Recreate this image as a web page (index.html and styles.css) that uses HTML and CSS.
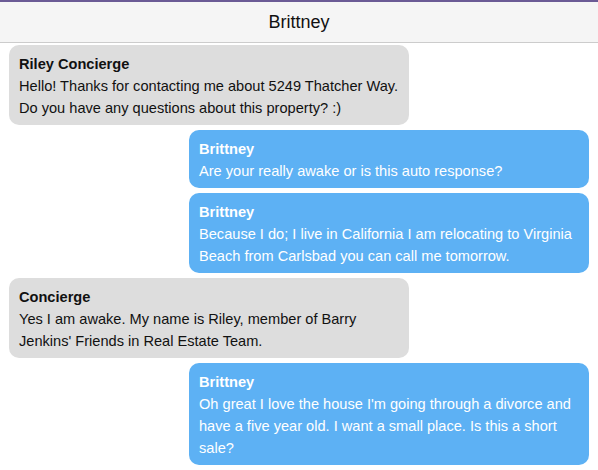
FILE: index.html
```html
<!DOCTYPE html>
<html>
<head>
<meta charset="utf-8">
<link rel="stylesheet" href="styles.css">
</head>
<body>
<div class="app">
  <header class="header">Brittney</header>
  <main class="messages">
    <div class="bubble them">
      <div class="name">Riley Concierge</div>
      <div class="text">Hello! Thanks for contacting me about 5249 Thatcher Way. Do you have any questions about this property? :)</div>
    </div>
    <div class="bubble me">
      <div class="name">Brittney</div>
      <div class="text">Are your really awake or is this auto response?</div>
    </div>
    <div class="bubble me">
      <div class="name">Brittney</div>
      <div class="text">Because I do; I live in California I am relocating to Virginia Beach from Carlsbad you can call me tomorrow.</div>
    </div>
    <div class="bubble them">
      <div class="name">Concierge</div>
      <div class="text">Yes I am awake. My name is Riley, member of Barry Jenkins' Friends in Real Estate Team.</div>
    </div>
    <div class="bubble me">
      <div class="name">Brittney</div>
      <div class="text">Oh great I love the house I'm going through a divorce and have a five year old. I want a small place. Is this a short sale?</div>
    </div>
  </main>
</div>
</body>
</html>
```
FILE: styles.css
```css
html, body {
  margin: 0;
  padding: 0;
  background: #ffffff;
}
body {
  font-family: "Liberation Sans", Arial, Helvetica, sans-serif;
  font-size: 14.6px;
  color: #111111;
}
.app {
  display: flex;
  flex-direction: column;
}
.header {
  height: 40px;
  border-top: 2px solid #6b5b95;
  border-bottom: 1px solid #cccccc;
  background: #f5f5f5;
  display: flex;
  align-items: center;
  justify-content: center;
  font-size: 18px;
  color: #111111;
}
.messages {
  display: flex;
  flex-direction: column;
  gap: 5px;
  padding: 2px 9px 8px;
}
.bubble {
  width: 400px;
  box-sizing: border-box;
  padding: 8px 10px 6px;
  border-radius: 10px;
  line-height: 22px;
}
.them {
  background: #dddddd;
  color: #111111;
  align-self: flex-start;
}
.me {
  background: #5db1f4;
  color: #ffffff;
  align-self: flex-end;
}
.name {
  font-weight: bold;
}
```
